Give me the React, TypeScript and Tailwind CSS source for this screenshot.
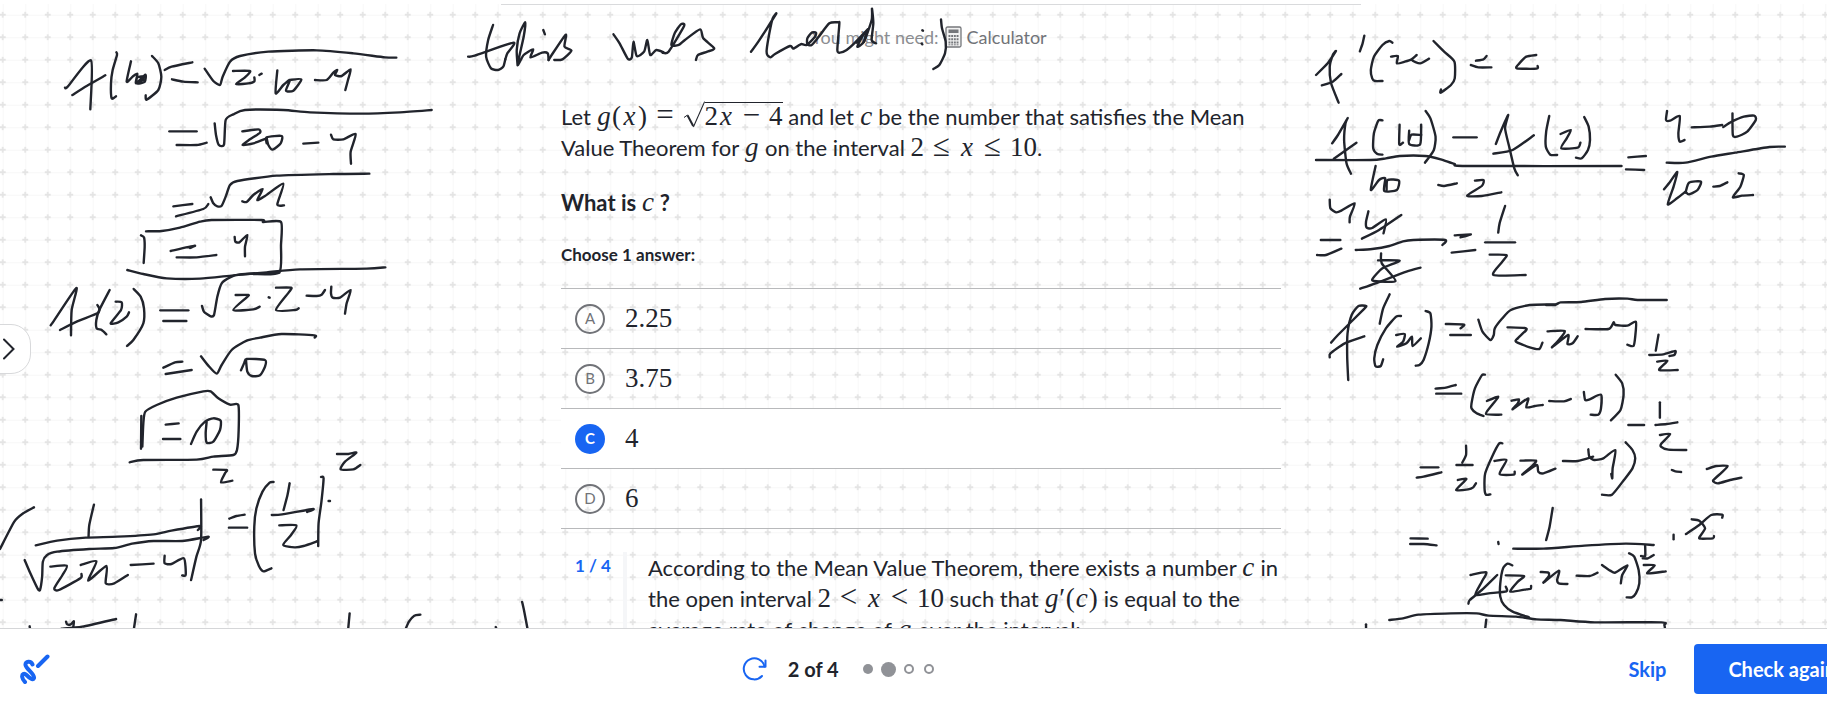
import React from "react";

type Point = [number, number];

/** Turns "x,y x,y ..." into a softly rounded pen stroke. */
function strokePath(points: string): string {
  const p = points.split(" ").map((s) => s.split(",").map(Number) as Point);
  let d = `M${p[0][0]} ${p[0][1]}`;
  for (let i = 0; i < p.length - 1; i++) {
    const a = p[Math.max(0, i - 1)];
    const b = p[i];
    const c = p[i + 1];
    const e = p[Math.min(p.length - 1, i + 2)];
    const k = 0.11;
    d += `C${b[0] + (c[0] - a[0]) * k} ${b[1] + (c[1] - a[1]) * k} ${c[0] - (e[0] - b[0]) * k} ${c[1] - (e[1] - b[1]) * k} ${c[0]} ${c[1]}`;
  }
  return d;
}

const notes: { transform: string; strokes: string[] }[] = [
  {
    transform: "scale(.33333)",
    strokes: [
      "195,263 203,260 273,181 271,328",
      "217,285 260,258 316,226",
      "349,157 351,165 338,210 333,250 335,295 348,289",
      "393,184 380,245 400,228 412,222 408,250 436,224 434,246 410,250 412,232 434,230 415,245 430,240",
      "456,168 475,190 484,230 475,270 440,299 437,286",
      "494,210 515,200 577,187",
      "516,238 550,245 593,247",
      "614,206 640,243 660,255 668,230 690,185 720,168 805,155 950,151 1060,160 1155,172 1189,173",
      "699,213 750,213 735,232 708,252 745,250 763,244 763,232",
      "778,225 785,221",
      "832,211 827,280 850,255 870,240 858,272 880,272 904,238 868,240",
      "945,240 980,240 1000,218 1012,210 1005,225 1025,228 1052,208 1044,240 1036,270",
      "508,394 590,394",
      "530,435 590,435 620,428",
      "644,370 648,405 656,434 672,434 677,360 700,343 735,330 850,330 930,337 1085,341 1200,337 1295,330",
      "727,394 775,388 780,398 750,418 728,435 760,430 800,415",
      "800,430 800,412 845,408 842,430 818,449 805,435 800,415",
      "910,431 955,428",
      "993,404 1000,418 1030,418 1067,402 1052,455 1053,491",
      "520,619 577,612",
      "528,649 610,627 625,612",
      "632,592 640,610 652,619 665,617 677,590 690,555 712,543 830,527 1000,522 1108,521",
      "727,604 740,606 760,585 788,567 772,600 795,588 850,551 832,613 852,616",
      "438,694 485,693 540,683 600,665 635,660 785,660 790,666 843,666 843,735 838,817 760,822",
      "423,706 432,712 434,740 431,789",
      "512,753 584,737 570,744",
      "530,772 590,772 649,765",
      "704,711 706,725 718,727 742,705 735,740 735,769",
      "382,810 430,822 500,835 600,836 700,826 800,817 900,808 1100,806 1156,802",
    ],
  },
  {
    transform: "translate(0 250) scale(.33333)",
    strokes: [
      "152,226 160,215 229,114 215,180 213,256",
      "180,240 230,215 292,190 298,176 292,165",
      "329,120 298,180 289,210 290,235 305,240 319,253",
      "347,155 365,157 363,180 332,220 355,217 380,200 387,187",
      "401,117 422,140 432,175 430,220 400,270 381,288",
      "481,181 565,181",
      "490,213 559,213",
      "606,168 612,185 632,199 642,195 652,140 665,100 690,82 720,73 838,68",
      "707,135 745,135 740,142 700,180 760,178 779,170",
      "806,142 809,143",
      "828,113 873,113 868,125 828,180 885,180 896,175",
      "920,137 950,138 965,134 975,120",
      "994,110 993,130 998,143 1020,143 1052,120 1040,160 1035,191",
      "490,353 525,337 547,335",
      "497,372 575,360",
      "603,319 625,347 650,371 665,345 695,300 740,272 780,263 845,252 943,256 944,263",
      "723,361 733,338 740,327 795,330 795,350 780,376 755,378 742,365 738,330",
      "424,498 423,596",
      "427,590 430,520 436,485 470,465 530,443 610,424 632,424 655,445 690,464 715,465 716,540 711,600 700,615 640,620 590,629 430,630 389,637",
      "497,524 536,520",
      "489,567 541,567",
      "573,582 590,545 615,515 640,505 662,512 660,540 640,575 620,578 617,550 620,515",
      "640,659 680,660 675,670 663,697 697,692",
      "1011,612 1045,612 1069,608 1035,635 1022,658 1060,658 1081,645",
    ],
  },
  {
    transform: "translate(0 430) scale(.35714 .33333)",
    strokes: [
      "0,357 40,275 65,250 95,232",
      "263,224 250,285 248,320",
      "100,346 160,332 240,323 330,320 430,313 480,302 560,288 554,300",
      "69,390 85,430 105,475 112,480 118,440 120,395 132,375 160,365 250,357 320,354 370,341 430,333 510,333 583,320 570,330",
      "141,410 187,407 175,435 152,475 165,480 225,445 228,432",
      "226,405 270,394 247,452 298,408 296,460 320,460 358,435",
      "366,405 430,401",
      "461,377 461,400 480,402 515,385 520,435 510,436",
      "563,208 563,330 550,380 535,450",
      "642,266 662,258 685,254",
      "641,293 692,293",
      "766,156 755,158 735,185 718,235 712,290 714,370 725,408 738,424 760,415",
      "811,160 805,195 794,240",
      "761,255 790,253 877,237 860,246",
      "782,286 830,286 815,315 793,345 825,352 850,348 890,333",
      "899,141 906,145 900,215 892,280 891,348",
      "920,213 924,213",
      "0,510 5,510",
      "83,589 84,596",
      "185,575 188,583 198,583 207,574 205,592",
      "172,596 230,590 325,567",
      "381,553 375,596",
      "979,550 975,596",
      "1177,554 1160,557 1145,575 1136,596",
      "1388,591 1390,596",
      "1462,516 1468,545 1477,596",
    ],
  },
  {
    transform: "translate(440 0) scale(.40816 .33333)",
    strokes: [
      "130,75 118,120 113,170 125,205 142,210 155,200 160,178",
      "69,170 85,167 180,128 165,160 160,178",
      "190,195 188,150 195,100 209,67 205,110 190,195 205,165 228,148 222,172 250,158 264,160 266,180",
      "253,90 257,103",
      "266,180 272,168 308,104 305,140 322,152 300,178 280,180",
      "425,103 440,130 460,176 470,172 474,125 482,168 500,155 508,120 515,165 530,150 548,157",
      "545,158 560,155 598,78 590,73 575,100 567,135 585,135 600,120 637,88 645,115 672,145 655,155 632,165 627,180",
    ],
  },
  {
    transform: "translate(740 0) scale(.33333)",
    strokes: [
      "33,155 55,125 108,42 98,55 88,100 80,150 82,165 92,172 105,162 150,138 160,146 178,135 185,132 200,135 225,110 228,98 215,98 202,115 202,133 215,135 235,112 268,70 295,67 298,72 292,150 300,158 320,150 345,128 383,88 368,108 352,140 372,125 395,60 396,26 400,70 395,120 408,130",
      "350,128 378,95 372,125",
      "547,91 549,92",
      "545,131 547,133",
      "603,58 606,85 617,125 615,160 598,195 580,207",
    ],
  },
  {
    transform: "translate(1290 0) scale(.34248 .33333)",
    strokes: [
      "76,225 110,190 134,153 125,165 116,200 120,250 142,308",
      "93,256 125,245 150,222",
      "217,107 212,130 204,154",
      "299,128 290,123 270,135 245,170 236,210 240,235 248,243 270,243",
      "295,170 315,168 312,190 335,185 355,178 370,165 356,180 380,190 406,176",
      "419,123 450,155 480,185 481,235 470,255 440,278 441,268",
      "543,182 565,178 574,168",
      "528,195 550,202 588,202",
      "719,165 690,170 670,190 662,205 720,206 723,198",
      "123,430 140,405 168,355 162,370 158,420 165,490 178,521",
      "128,476 194,428",
      "270,361 258,362 245,400 243,445 255,462 270,464",
      "320,374 319,433 330,428",
      "348,392 348,432 380,433 383,374",
      "383,405 355,404 348,420",
      "396,333 410,355 425,410 420,450 400,480 394,488",
      "76,480 235,480 280,475 320,468 395,468 440,478 480,492 515,498 968,498",
      "477,412 545,412",
      "601,432 615,395 637,345 628,385 640,440 655,505 665,526",
      "594,461 650,450 712,406",
      "757,348 748,395 747,440 760,464 780,465",
      "790,402 820,390 808,415 792,445 840,443 848,428",
      "859,351 872,380 876,420 870,450 852,475 835,473",
      "988,472 1039,468",
      "981,508 1034,510",
      "1101,333 1098,360 1110,362 1138,348 1134,400 1138,425 1152,420",
      "1173,382 1225,380 1262,375",
      "1292,340 1293,405 1305,410 1335,395 1360,360 1355,347 1325,350 1290,365 1265,381",
      "1100,488 1155,488 1230,470 1300,458 1400,441 1445,440",
      "1092,568 1110,545 1131,516 1120,560 1103,613 1130,595 1155,575",
      "1155,578 1165,548 1200,545 1190,570 1165,583 1155,575",
      "1236,560 1255,558 1277,547",
      "1310,520 1325,525 1315,560 1293,592 1320,587 1352,585",
      "250,498 236,570 260,540 278,535 275,573 312,570 318,542 285,540 282,570",
      "433,555 450,558 487,550",
      "540,542 565,540 560,558 517,587 560,588 617,577",
      "116,599 118,625 135,637 150,632 189,610 175,650 174,667",
      "229,634 222,665 224,683 240,684 280,658 273,700",
      "210,716 260,690 325,645",
      "90,720 147,720",
      "79,765 105,765 150,746",
      "192,750 240,747 290,738 330,724 360,720 453,720 445,735",
      "266,760 268,790 308,843 245,843 242,835 270,805 320,782 257,781",
      "205,866 250,850 340,815 381,803",
      "481,706 528,703 498,712",
      "472,758 541,750",
      "628,618 612,670 608,698",
      "570,727 657,727",
      "583,764 632,765 620,785 594,825 688,825",
    ],
  },
  {
    transform: "translate(1290 270) scale(.34248 .33333)",
    strokes: [
      "120,218 140,195 215,118 222,108 200,108 180,135 168,190 167,260 170,330",
      "116,262 118,250 160,220 217,199",
      "291,73 272,115 262,161",
      "324,138 310,140 280,175 255,225 246,265 250,289 265,288 272,268",
      "310,195 335,192 330,215 313,230 340,220 356,200 358,228 382,205",
      "396,123 410,130 413,170 405,220 390,270 378,285 367,287",
      "455,162 508,164 498,175",
      "468,195 528,195",
      "550,149 562,185 585,210 595,195 598,175 620,145 645,120 700,105 775,103 790,97 850,96 920,87 985,86 1015,90 1100,90",
      "748,105 775,105",
      "635,172 685,174 690,180 665,205 660,215 700,232 728,237 737,218",
      "752,184 802,183 785,210 765,232 812,195 810,222 825,220 840,199",
      "863,177 930,177 945,157 950,165 985,167 1010,155 1008,200 1003,228 985,224",
      "1076,194 1068,242",
      "1049,255 1090,253 1125,243 1122,255 1108,258",
      "1072,275 1102,272 1078,300 1132,300",
      "425,356 455,353 484,345",
      "427,371 500,371",
      "569,314 560,316 540,355 530,400 530,415 545,430 565,438",
      "575,393 608,380 590,405 572,432 617,434",
      "647,392 668,388 665,400 650,418 695,385 690,412 715,408 738,405",
      "757,393 800,394 820,387",
      "858,366 862,390 875,388 908,374 908,415 900,434 878,434",
      "951,314 970,340 974,375 965,420 937,451",
      "988,465 1034,465",
      "1080,397 1080,443",
      "1067,465 1100,462 1131,457",
      "1080,495 1110,492 1085,520 1083,530 1105,539 1157,540",
      "382,592 433,592",
      "370,623 390,620 442,607",
      "514,527 514,555 503,578",
      "486,585 533,585",
      "490,630 515,627 485,660 520,658 535,652 543,640",
      "620,520 610,521 590,560 570,610 568,655 572,674 585,673",
      "597,573 632,570 612,612 653,614 656,605",
      "673,572 718,572 705,590 678,614 720,585 725,605 740,610 775,596",
      "797,573 840,573 885,560",
      "871,538 874,560 888,570 915,565 950,540 942,595 941,625 938,612",
      "980,517 1000,540 1008,565 1000,595 975,630 940,674 911,674",
      "1115,600 1125,604 1142,606",
      "1217,597 1245,588 1278,588 1260,608 1235,632 1250,640 1285,630 1318,623",
    ],
  },
  {
    transform: "translate(1290 450) scale(.34248 .33333)",
    strokes: [
      "352,265 402,266",
      "351,282 390,282 428,286",
      "608,276 609,282",
      "767,174 758,230 748,270",
      "652,296 740,296 860,287 980,281 1062,285",
      "1037,287 1037,318 1025,318",
      "1030,325 1045,325 1062,315",
      "1033,345 1065,346 1043,370 1097,364",
      "1120,254 1120,268",
      "1173,208 1195,212 1212,235 1195,262 1200,266 1235,265 1238,258",
      "1156,252 1195,225 1230,195 1262,194 1262,203",
      "527,375 573,367 560,395 541,435 580,430 632,424 630,410",
      "521,461 525,450 560,420 605,375",
      "649,346 635,341 622,355 614,400 614,440 625,465 650,485 698,502",
      "630,376 683,378 665,395 643,425 690,418 703,416 704,408",
      "732,366 755,368 755,380 740,398 785,362 780,390 785,400 810,402",
      "837,377 875,378 898,368",
      "911,345 935,362 950,368 985,346 970,375 966,400",
      "990,310 1005,320 1018,360 1020,400 1010,430 998,442 983,442",
      "290,510 330,505 375,494 470,490 545,490 580,497 660,500 720,508 790,510 890,517 1085,517 1093,525 1095,536",
      "573,509 570,536",
      "222,523 222,536",
    ],
  },
];

function Handwriting() {
  return (
    <svg className="pointer-events-none absolute left-0 top-0 z-10 h-[628px] w-[1827px]" viewBox="0 0 1827 628" fill="none" stroke="#21242c" strokeWidth="2.4" strokeLinecap="round" strokeLinejoin="round" aria-hidden="true">
      {notes.map((note, i) => (
        <g key={i} transform={note.transform}>
          {note.strokes.map((s, j) => (
            <path key={j} d={strokePath(s)} vectorEffect="non-scaling-stroke" />
          ))}
        </g>
      ))}
    </svg>
  );
}

function GridPaper() {
  return (
    <svg className="absolute inset-0 h-full w-full" aria-hidden="true">
      <defs>
        <pattern id="paper" x="2.75" y="14.75" width="22.5" height="22.5" patternUnits="userSpaceOnUse">
          <path d="M0 0H22.5M0 0V22.5" stroke="#f5f5f5" strokeWidth="1.4" />
          <path d="M0 0H3M19.5 0H22.5M0 0V3M0 19.5V22.5" stroke="#e4e4e4" strokeWidth="1.8" />
          <path d="M22.5 0V3M22.5 19.5V22.5M0 22.5H3M19.5 22.5H22.5" stroke="#e4e4e4" strokeWidth="1.8" />
        </pattern>
      </defs>
      <rect y="4" width="100%" height="100%" fill="url(#paper)" />
    </svg>
  );
}

function Num({ children }: { children: React.ReactNode }) {
  return <span className="font-['Liberation_Serif',serif] text-[27px] leading-none font-normal">{children}</span>;
}

function Var({ children }: { children: string }) {
  const width = children === "x" ? "w-4" : children === "g" ? "w-[15px]" : "w-[13px]";
  return (
    <i className={`inline-block text-center font-['Liberation_Serif',serif] text-[27px] leading-none font-normal ${width}`}>{children}</i>
  );
}

function Rel({ children }: { children: string }) {
  return (
    <span className="mx-[7px] inline-block w-[21px] text-center font-['Liberation_Serif',serif] text-[31px] leading-[20px] font-normal">{children}</span>
  );
}

function Paren({ children }: { children: string }) {
  return <span className="inline-block w-[10px] text-center font-['Liberation_Serif',serif] text-[27px] leading-none font-normal">{children}</span>;
}

function Sqrt({ children }: { children: React.ReactNode }) {
  return (
    <span className="whitespace-nowrap">
      <svg className="inline h-[27px] w-[22px] align-[-3px]" viewBox="0 0 22 27" fill="none" stroke="#21242c" aria-hidden="true">
        <path d="M1 16.5L4.5 14" strokeWidth="1" />
        <path d="M4.5 14.3L10.2 25" strokeWidth="2" />
        <path d="M10.4 26L21.6 .6" strokeWidth="1.1" />
      </svg>
      <span className="inline-block border-t border-[#21242c] font-['Liberation_Serif',serif] text-[27px] leading-none">{children}</span>
    </span>
  );
}

function Choice({ letter, value, selected = false }: { letter: string; value: string; selected?: boolean }) {
  return (
    <li className={`border-b border-[#b8b9bb] ${selected ? "bg-white" : ""}`}>
      <label className="flex h-[59px] cursor-pointer items-center gap-5 pl-3.5">
        <input type="radio" name="answer" value={value} defaultChecked={selected} className="sr-only" />
        <span
          className={
            selected
              ? "flex size-[30px] items-center justify-center rounded-full bg-[#1865f2] text-[15px] font-bold text-white"
              : "flex size-[30px] items-center justify-center rounded-full border-2 border-[#717378] text-[15px] text-[#717378]"
          }
        >
          {letter}
        </span>
        <Num>{value}</Num>
      </label>
    </li>
  );
}

export default function App() {
  return (
    <div className="h-screen overflow-hidden bg-white font-[Lato,sans-serif] text-[#21242c]">
      <div className="flex h-full w-[calc(100%+35px)] flex-col">
        <main className="relative min-h-0 flex-1 overflow-hidden">
          <GridPaper />
          <Handwriting />
          <button aria-label="Open sidebar" className="absolute -left-px top-[324px] flex h-[50px] w-8 items-center rounded-r-[20px] border border-[#d8d9db] bg-white">
            <svg className="ml-[3px] h-[22px] w-3" viewBox="0 0 12 22" fill="none" stroke="#21242c" strokeWidth="2" strokeLinecap="round" aria-hidden="true">
              <path d="M1 1.5L10.500 11L1 20.500" />
            </svg>
          </button>

          <div className="relative mx-auto mt-1 w-[860px] border-t border-[#d9dadc] pr-20 pl-[60px]">
            <div className="mt-5 -mr-4 flex h-6 items-center justify-center text-[18px] text-[#8b8d91]">
              <span>You might need:</span>
              <svg className="ml-1.5 h-[22px] w-[18px]" viewBox="0 0 18 22" fill="none" aria-hidden="true">
                <rect x="1" y="1" width="15" height="20" rx="1.500" fill="#f1f1f1" stroke="#75777b" strokeWidth="1.300" />
                <rect x="3.500" y="3.500" width="10" height="3.500" fill="#75777b" />
                <path d="M3.500 10h10M3.500 13.200h10M3.500 16.400h10" stroke="#75777b" strokeWidth="2" strokeDasharray="1.900 .8" />
                <path d="M3.500 18.800h10" stroke="#75777b" strokeWidth="1" strokeDasharray="1.900 .8" />
              </svg>
              <button className="ml-1 text-[#717378]">Calculator</button>
            </div>

            <div className="mt-[52px] text-[22px] leading-[31px]">
              <p>
                Let <Var>g</Var>
                <Paren>(</Paren>
                <Var>x</Var>
                <Paren>)</Paren>
                <Rel>=</Rel>
                <Sqrt>
                  <Num>2</Num>
                  <Var>x</Var>
                  <Rel>−</Rel>
                  <Num>4</Num>
                </Sqrt>{" "}
                and let <Var>c</Var> be the number that satisfies the Mean Value Theorem for <Var>g</Var> on the interval <Num>2</Num>
                <Rel>≤</Rel>
                <Var>x</Var>
                <Rel>≤</Rel>
                <Num>10</Num>.
              </p>
              <p className="mt-6 font-bold">
                What is <Var>c</Var> ?
              </p>
            </div>

            <fieldset className="mt-[25px]">
              <legend className="text-[17px] leading-6 font-bold">Choose 1 answer:</legend>
              <ul className="mt-[21px] border-t border-[#b8b9bb]">
                <Choice letter="A" value="2.25" />
                <Choice letter="B" value="3.75" />
                <Choice letter="C" value="4" selected />
                <Choice letter="D" value="6" />
              </ul>
            </fieldset>

            <div className="mt-[23px] -mr-5 flex">
              <div className="w-[62px] shrink-0 pt-0.5 pl-3.5 text-[17px] leading-6 font-bold text-[#1865f2]">1 / 4</div>
              <div className="border-l-4 border-[#f5f6f8] pl-[21px] text-[22px] leading-[31px]">
                <p>
                  According to the Mean Value Theorem, there exists a number <Var>c</Var> in the open interval <Num>2</Num>
                  <Rel>&lt;</Rel>
                  <Var>x</Var>
                  <Rel>&lt;</Rel>
                  <Num>10</Num> such that <Var>g</Var>
                  <Num>′</Num>
                  <Paren>(</Paren>
                  <Var>c</Var>
                  <Paren>)</Paren> is equal to the average rate of change of <Var>g</Var> over the interval:
                </p>
              </div>
            </div>
          </div>
        </main>

        <footer className="flex h-[77px] shrink-0 items-center justify-between border-t border-[#d5d6d8] bg-white pt-1 pl-5">
          <button aria-label="Show scratchpad">
            <svg className="size-[30px]" viewBox="0 0 30 30" fill="none" stroke="#1865f2" strokeWidth="4" strokeLinecap="round" aria-hidden="true">
              <path d="M27.500 2.500L18 12" />
              <path d="M12.500 10.500C11 6.500 5 7 5.500 11C6 15 15 20 14 24C13 27 9 23.500 6.500 21C4 18.500 1.800 20 2.200 23C2.500 25.500 4 27 5 28" />
            </svg>
          </button>
          <div className="flex items-center">
            <button aria-label="Start over">
              <svg className="size-[26px]" viewBox="0 0 26 26" fill="none" stroke="#1865f2" strokeWidth="2" strokeLinecap="round" strokeLinejoin="round" aria-hidden="true">
                <path d="M21 20A10.500 10.500 0 1 1 23.500 10.500" />
                <path d="M24.500 4.500V10.800H18.500" />
              </svg>
            </button>
            <span className="ml-[21px] text-[20px] font-bold">2 of 4</span>
            <span className="ml-6 flex items-center gap-[10px] pr-1">
              <span className="size-2.5 rounded-full bg-[#909297]" />
              <span className="-mx-0.5 size-[15px] rounded-full bg-[#909297]" />
              <span className="size-2.5 rounded-full border-2 border-[#909297]" />
              <span className="size-2.5 rounded-full border-2 border-[#909297]" />
            </span>
          </div>
          <div className="flex items-center gap-7">
            <button className="text-[20px] font-bold text-[#1865f2]">Skip</button>
            <button className="h-[50px] rounded bg-[#1865f2] pr-[26px] pl-[34px] text-[20px] font-bold text-white">Check again</button>
          </div>
        </footer>
      </div>
    </div>
  );
}
